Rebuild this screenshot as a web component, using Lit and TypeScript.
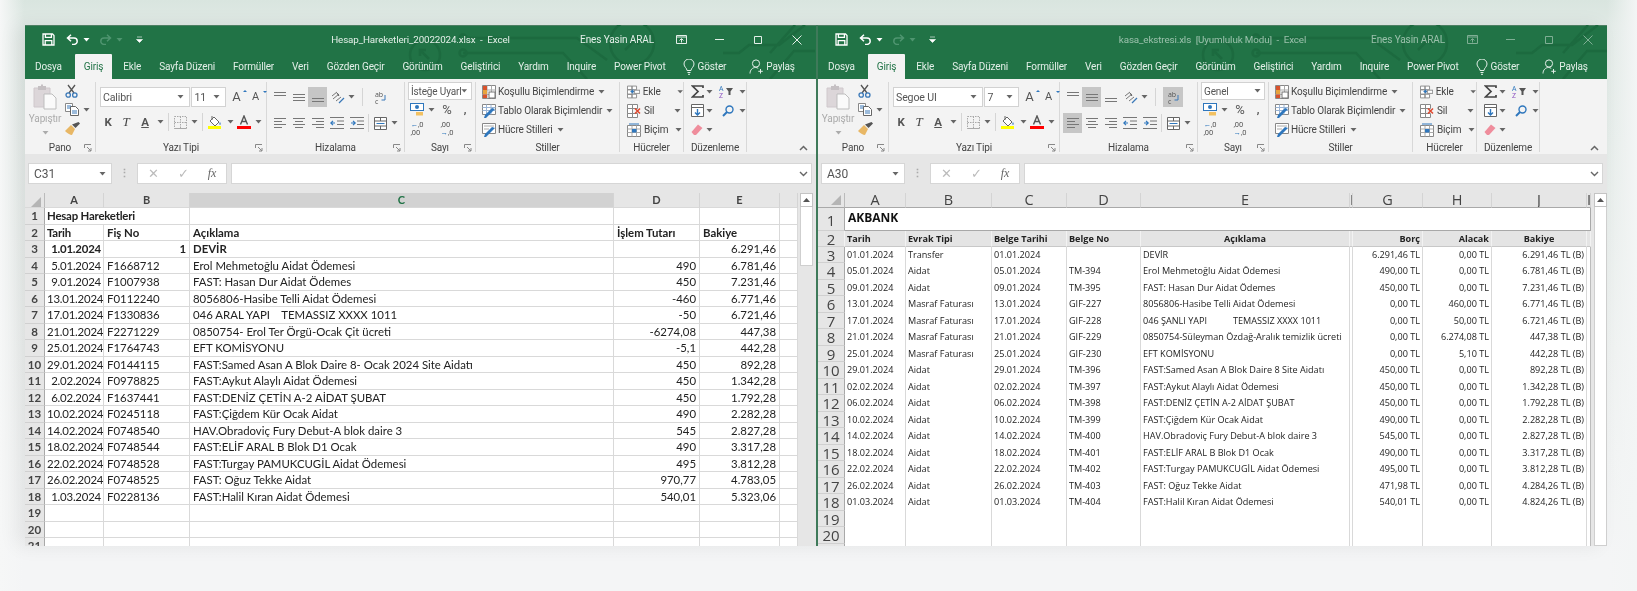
import { LitElement, html, svg, css, TemplateResult } from "lit";
import { customElement } from "lit/decorators.js";

const leftRows: string[][] = [
  ["1.01.2024", "1", "DEVİR", "", "6.291,46"],
  ["5.01.2024", "F1668712", "Erol Mehmetoğlu Aidat Ödemesi", "490", "6.781,46"],
  ["9.01.2024", "F1007938", "FAST: Hasan Dur Aidat Ödemes", "450", "7.231,46"],
  ["13.01.2024", "F0112240", "8056806-Hasibe Telli Aidat Ödemesi", "-460", "6.771,46"],
  ["17.01.2024", "F1330836", "046 ARAL YAPI    TEMASSIZ XXXX 1011", "-50", "6.721,46"],
  ["21.01.2024", "F2271229", "0850754- Erol Ter Örgü-Ocak Çit ücreti", "-6274,08", "447,38"],
  ["25.01.2024", "F1764743", "EFT KOMİSYONU", "-5,1", "442,28"],
  ["29.01.2024", "F0144115", "FAST:Samed Asan A Blok Daire 8- Ocak 2024 Site Aidatı", "450", "892,28"],
  ["2.02.2024", "F0978825", "FAST:Aykut Alaylı Aidat Ödemesi", "450", "1.342,28"],
  ["6.02.2024", "F1637441", "FAST:DENİZ ÇETİN A-2 AİDAT ŞUBAT", "450", "1.792,28"],
  ["10.02.2024", "F0245118", "FAST:Çiğdem Kür Ocak Aidat", "490", "2.282,28"],
  ["14.02.2024", "F0748540", "HAV.Obradoviç Fury Debut-A blok daire 3", "545", "2.827,28"],
  ["18.02.2024", "F0748544", "FAST:ELİF ARAL B Blok D1 Ocak", "490", "3.317,28"],
  ["22.02.2024", "F0748528", "FAST:Turgay PAMUKCUGİL Aidat Ödemesi", "495", "3.812,28"],
  ["26.02.2024", "F0748525", "FAST: Oğuz Tekke Aidat", "970,77", "4.783,05"],
  ["1.03.2024", "F0228136", "FAST:Halil Kıran Aidat Ödemesi", "540,01", "5.323,06"],
  ["", "", "", "", ""],
  ["", "", "", "", ""],
  ["", "", "", "", ""],
];

const rightRows: string[][] = [
  ["01.01.2024", "Transfer", "01.01.2024", "", "DEVİR", "6.291,46 TL", "0,00 TL", "6.291,46 TL (B)"],
  ["05.01.2024", "Aidat", "05.01.2024", "TM-394", "Erol Mehmetoğlu Aidat Ödemesi", "490,00 TL", "0,00 TL", "6.781,46 TL (B)"],
  ["09.01.2024", "Aidat", "09.01.2024", "TM-395", "FAST: Hasan Dur Aidat Ödemes", "450,00 TL", "0,00 TL", "7.231,46 TL (B)"],
  ["13.01.2024", "Masraf Faturası", "13.01.2024", "GIF-227", "8056806-Hasibe Telli Aidat Ödemesi", "0,00 TL", "460,00 TL", "6.771,46 TL (B)"],
  ["17.01.2024", "Masraf Faturası", "17.01.2024", "GIF-228", "046 ŞANLI YAPI           TEMASSIZ XXXX 1011", "0,00 TL", "50,00 TL", "6.721,46 TL (B)"],
  ["21.01.2024", "Masraf Faturası", "21.01.2024", "GIF-229", "0850754-Süleyman Özdağ-Aralık temizlik ücreti", "0,00 TL", "6.274,08 TL", "447,38 TL (B)"],
  ["25.01.2024", "Masraf Faturası", "25.01.2024", "GIF-230", "EFT KOMİSYONU", "0,00 TL", "5,10 TL", "442,28 TL (B)"],
  ["29.01.2024", "Aidat", "29.01.2024", "TM-396", "FAST:Samed Asan A Blok Daire 8 Site Aidatı", "450,00 TL", "0,00 TL", "892,28 TL (B)"],
  ["02.02.2024", "Aidat", "02.02.2024", "TM-397", "FAST:Aykut Alaylı Aidat Ödemesi", "450,00 TL", "0,00 TL", "1.342,28 TL (B)"],
  ["06.02.2024", "Aidat", "06.02.2024", "TM-398", "FAST:DENİZ ÇETİN A-2 AİDAT ŞUBAT", "450,00 TL", "0,00 TL", "1.792,28 TL (B)"],
  ["10.02.2024", "Aidat", "10.02.2024", "TM-399", "FAST:Çiğdem Kür Ocak Aidat", "490,00 TL", "0,00 TL", "2.282,28 TL (B)"],
  ["14.02.2024", "Aidat", "14.02.2024", "TM-400", "HAV.Obradoviç Fury Debut-A blok daire 3", "545,00 TL", "0,00 TL", "2.827,28 TL (B)"],
  ["18.02.2024", "Aidat", "18.02.2024", "TM-401", "FAST:ELİF ARAL B Blok D1 Ocak", "490,00 TL", "0,00 TL", "3.317,28 TL (B)"],
  ["22.02.2024", "Aidat", "22.02.2024", "TM-402", "FAST:Turgay PAMUKCUGİL Aidat Ödemesi", "495,00 TL", "0,00 TL", "3.812,28 TL (B)"],
  ["26.02.2024", "Aidat", "26.02.2024", "TM-403", "FAST: Oğuz Tekke Aidat", "471,98 TL", "0,00 TL", "4.284,26 TL (B)"],
  ["01.03.2024", "Aidat", "01.03.2024", "TM-404", "FAST:Halil Kıran Aidat Ödemesi", "540,01 TL", "0,00 TL", "4.824,26 TL (B)"],
  ["", "", "", "", "", "", "", ""],
  ["", "", "", "", "", "", "", ""],
  ["", "", "", "", "", "", "", ""],
];

const tabs = ["Ekle", "Sayfa Düzeni", "Formüller", "Veri", "Gözden Geçir", "Görünüm", "Geliştirici", "Yardım", "Inquire", "Power Pivot"];

const arrow = html`<svg class="arr" width="7" height="4" viewBox="0 0 7 4"><path d="M.5 0h6L3.5 3.5z" fill="#666"/></svg>`;
const chev = (c = "#666") => html`<svg width="9" height="6" viewBox="0 0 9 6"><path d="M1 1l3.5 3.5L8 1" fill="none" stroke=${c} stroke-width="1.4"/></svg>`;
const launcher = html`<svg class="launch" width="8" height="8" viewBox="0 0 8 8"><path d="M.5 4V.5H7M3 3l4 4M7 4v3H4" fill="none" stroke="#888"/></svg>`;
const lines = (ys: number[], xs: [number, number][], c = "#777") => html`<svg width="14" height="14" viewBox="0 0 14 14">${ys.map((y, i) => svg`<path d="M${xs[i % xs.length][0]} ${y + 0.5}H${xs[i % xs.length][1]}" stroke=${c} stroke-width="1"/>`)}</svg>`;

const ic = {
  save: html`<svg width="13" height="13" viewBox="0 0 13 13"><path d="M1 1h9.5L12 2.5V12H1z" fill="none" stroke="#fff" stroke-width="1.3"/><path d="M3.4 1v3.4h6V1M3.2 12V7.6h6.6V12" fill="none" stroke="#fff" stroke-width="1.3"/></svg>`,
  undo: (c: string) => html`<svg width="13" height="11" viewBox="0 0 13 11"><path d="M5 .8L1.5 4 5 7.2M1.8 4H8a3.2 3.2 0 0 1 0 6.4H6" fill="none" stroke=${c} stroke-width="1.5"/></svg>`,
  redo: (c: string) => html`<svg width="13" height="11" viewBox="0 0 13 11"><path d="M8 .8L11.5 4 8 7.2M11.2 4H5a3.2 3.2 0 0 0 0 6.4h2" fill="none" stroke=${c} stroke-width="1.5"/></svg>`,
  qat: html`<svg width="7" height="7" viewBox="0 0 7 7"><path d="M1 1h5M.5 3.5h6L3.5 6.5z" fill="#fff" stroke="#fff" stroke-width=".6"/></svg>`,
  bulb: html`<svg width="12" height="16" viewBox="0 0 12 16"><path d="M4 11.5C4 9 1 8 1 5a5 5 0 0 1 10 0c0 3-3 4-3 6.5zM4.5 13.5h3M5 15.3h2" fill="none" stroke="#e3efe8" stroke-width="1"/></svg>`,
  user: html`<svg width="15" height="15" viewBox="0 0 15 15"><circle cx="7" cy="4.5" r="3.6" fill="none" stroke="#e3efe8"/><path d="M1 14.5c0-3.5 2.5-6 5.5-6 1 0 2 .3 2.7.8M11.5 10v4.5M9.3 12.3h4.500" fill="none" stroke="#e3efe8"/></svg>`,
  paste: html`<svg width="24" height="26" viewBox="0 0 24 26"><path d="M1 4h16v19H1z" fill="#dcd6d9" stroke="#cfc8cc"/><path d="M5 2h8v4H5z" fill="#c5c0c3"/><path d="M8 .5h2v2H8z" fill="#c5c0c3"/><path d="M11 10h8l4 4v11H11z" fill="#fafafa" stroke="#bdbdbd"/></svg>`,
  cut: html`<svg width="13" height="14" viewBox="0 0 13 14"><path d="M3 1l6 8M10 1L4 9" stroke="#555" stroke-width="1.3" fill="none"/><circle cx="3.2" cy="11" r="2.2" fill="none" stroke="#3b79b8" stroke-width="1.3"/><circle cx="9.8" cy="11" r="2.2" fill="none" stroke="#3b79b8" stroke-width="1.3"/></svg>`,
  copy: html`<svg width="14" height="13" viewBox="0 0 14 13"><path d="M.5.5h7v8h-7z" fill="#fff" stroke="#888"/><path d="M5.5 3.5h5l3 3v6h-8z" fill="#fff" stroke="#666"/><path d="M2 3h4M2 5h3M7 8h5M7 10h5" stroke="#3b79b8"/></svg>`,
  brush: html`<svg width="15" height="13" viewBox="0 0 15 13"><path d="M0 9l6-6 4 4-3 6c-2 0-5-2-7-4z" fill="#e8b765"/><path d="M7 2.5L10.5 6 15 1.5 13.5 0z" fill="#555"/></svg>`,
  grow: html`<span class="fa">A<i class="up"></i></span>`,
  shrink: html`<span class="fa sm">A<i class="dn"></i></span>`,
  borders: html`<svg width="13" height="13" viewBox="0 0 13 13"><path d="M.5.5h12v12H.5zM6.5.5v12M.5 6.5h12" fill="none" stroke="#a9a9a9" stroke-dasharray="1.5 1"/><path d="M.5 12.5h12" stroke="#a9a9a9"/></svg>`,
  fill: html`<svg width="14" height="14" viewBox="0 0 14 14"><path d="M2 6l4-4 5 5-4 4z" fill="#fff" stroke="#666"/><path d="M4 1v4" stroke="#666"/><path d="M12 7c1 1.500 1 2.500 0 3-1-.5-1-1.500 0-3z" fill="#4a86c6"/><rect y="11" width="13" height="3" fill="#ffff00"/></svg>`,
  color: html`<svg width="14" height="14" viewBox="0 0 14 14"><path d="M3.500 9.500L7 1l3.500 8.500M4.800 6.500h4.400" fill="none" stroke="#555" stroke-width="1.400"/><rect y="11" width="14" height="3" fill="#ff0000"/></svg>`,
  orient: html`<svg width="15" height="13" viewBox="0 0 15 13"><path d="M2 5l5-4M3 8l6-5M6 10l5-4" stroke="#777" fill="none"/><path d="M9 12l5-5" stroke="#3b79b8" stroke-width="1.300"/><path d="M7 2l2 3" stroke="#555"/></svg>`,
  wrap: html`<svg width="13" height="15" viewBox="0 0 13 15"><text x="1" y="7" font-size="7" font-family="Open Sans" fill="#555">ab</text><text x="1" y="14" font-size="7" font-family="Open Sans" fill="#555">c</text><path d="M11 5v5H7.500" fill="none" stroke="#3b79b8"/></svg>`,
  indentL: html`<svg width="14" height="12" viewBox="0 0 14 12"><path d="M0 .5h14M7 4h7M7 7.500h7M0 11.500h14" stroke="#777"/><path d="M5 6H1M3 3.800L.8 6 3 8.200" fill="none" stroke="#2f77bd" stroke-width="1.200"/></svg>`,
  indentR: html`<svg width="14" height="12" viewBox="0 0 14 12"><path d="M0 .5h14M7 4h7M7 7.500h7M0 11.500h14" stroke="#777"/><path d="M1 6h4M3 3.800L5.200 6 3 8.200" fill="none" stroke="#2f77bd" stroke-width="1.200"/></svg>`,
  merge: html`<svg width="13" height="13" viewBox="0 0 13 13"><path d="M.5.500h12v12H.5zM.5 4h12M.5 9h12M6.500.500V4M6.500 9v3.500" fill="#fff" stroke="#666"/><path d="M2.500 6.500h8" stroke="#2f77bd"/></svg>`,
  money: html`<svg width="15" height="13" viewBox="0 0 15 13"><rect x=".5" y=".5" width="13" height="7" fill="#fff" stroke="#2f77bd"/><circle cx="7" cy="4" r="2" fill="#2f77bd"/><rect x="6" y="9" width="7" height="3.500" fill="#f2c162"/></svg>`,
  dec: html`<span class="dec"><b>←</b>,0<br>,00</span>`,
  dec2: html`<span class="dec">,00<br><b>→</b>,0</span>`,
  cond: html`<svg width="14" height="14" viewBox="0 0 14 14"><path d="M.5.500h13v13H.5z" fill="#fff" stroke="#888"/><path d="M.5 5h13M.5 9.500h13M5 .500v13M9.500.500v13" stroke="#aaa"/><rect x="1" y="1" width="4" height="4" fill="#d9532c"/><rect x="1" y="5" width="4" height="4" fill="#e8a33c"/><rect x="1" y="9.500" width="4" height="3.500" fill="#d9532c"/><rect x="7" y="7" width="6" height="6" fill="#fff" stroke="#777"/></svg>`,
  table: html`<svg width="14" height="14" viewBox="0 0 14 14"><path d="M.5.500h13v10H.5z" fill="#fff" stroke="#888"/><path d="M.5 3.500h13M.5 6.500h13M4.500.500v10M9 .500v10" stroke="#9ab4d4"/><path d="M13 5L6 12l-2 2H2l1-3 7-7z" fill="#2f77bd"/></svg>`,
  style: html`<svg width="14" height="14" viewBox="0 0 14 14"><path d="M.5.500h13v10H.5z" fill="#fff" stroke="#888"/><path d="M2 3h10M2 6h5" stroke="#aaa"/><path d="M13 5L6 12l-2 2H2l1-3 7-7z" fill="#2f77bd"/></svg>`,
  insert: html`<svg width="14" height="14" viewBox="0 0 14 14"><path d="M.5.500h5v4h-5zM.5 4.500h5v5h-5zM.5 9.500h5v4h-5zM5.500 9.500h5v4h-5zM5.500.500h5v4h-5z" fill="#fff" stroke="#888"/><path d="M14 6.500H4M7 4.500L4.500 6.500 7 8.500" fill="none" stroke="#2f77bd" stroke-width="1.200"/><rect x="8" y="5" width="6" height="3.500" fill="#fff" stroke="#888"/></svg>`,
  del: html`<svg width="14" height="14" viewBox="0 0 14 14"><path d="M.5.500h5v4h-5zM.5 4.500h5v5h-5zM.5 9.500h5v4h-5zM5.500 9.500h5v4h-5zM5.500.500h5v4h-5z" fill="#fff" stroke="#888"/><path d="M8 4.500l5 5M13 4.500l-5 5" stroke="#e0472d" stroke-width="1.500"/></svg>`,
  format: html`<svg width="14" height="14" viewBox="0 0 14 14"><path d="M.5 2.500h13v11H.5z" fill="#fff" stroke="#888"/><path d="M.5 6h13M.5 9.500h13M5 2.500v11M9.500 2.500v11" stroke="#aaa"/><rect x="5" y="6" width="4.500" height="3.500" fill="#2f77bd"/><path d="M2 1h10" stroke="#2f77bd"/></svg>`,
  sigma: html`<svg width="13" height="13" viewBox="0 0 13 13"><path d="M12 3V1H1.500L7 6.500 1.500 12H12v-2" fill="none" stroke="#444" stroke-width="1.700"/></svg>`,
  sort: html`<svg width="18" height="15" viewBox="0 0 18 15"><text x="0" y="6.500" font-size="7" font-family="Open Sans" fill="#2f77bd">A</text><text x="0" y="14" font-size="7" font-family="Open Sans" fill="#8a4fc0">Z</text><path d="M7 4h7L11.500 7.500V11h-2V7.500z" fill="#555"/></svg>`,
  filld: html`<svg width="13" height="13" viewBox="0 0 13 13"><path d="M.5.500h12v12H.5z" fill="#fff" stroke="#666"/><path d="M.5 3.500h12" stroke="#666"/><path d="M6.500 5v6M4 8.500l2.500 2.500L9 8.500" fill="none" stroke="#2f77bd" stroke-width="1.400"/></svg>`,
  find: html`<svg width="12" height="12" viewBox="0 0 12 12"><circle cx="7.500" cy="4.500" r="3.500" fill="none" stroke="#2f77bd" stroke-width="1.400"/><path d="M5 7L1 11" stroke="#2f77bd" stroke-width="2"/></svg>`,
  eraser: html`<svg width="12" height="12" viewBox="0 0 12 12"><path d="M7 .5L11.500 4 5 11H3L.5 8z" fill="#ef8d9c"/></svg>`,
  corner: html`<svg width="10" height="10" viewBox="0 0 10 10"><path d="M10 0v10H0z" fill="#b5b5b5"/></svg>`,
  ribbonDisp: (c: string) => html`<svg width="11" height="9" viewBox="0 0 11 9"><path d="M.5.500h10v8H.5z" fill="none" stroke=${c}/><path d="M.5 2h10" stroke=${c}/><path d="M5.500 7.500V4M3.500 5.500l2-2 2 2" fill="none" stroke=${c}/></svg>`,
  min: (c: string) => html`<svg width="9" height="9" viewBox="0 0 9 9"><path d="M0 4.500h9" stroke=${c}/></svg>`,
  max: (c: string) => html`<svg width="8" height="8" viewBox="0 0 8 8"><path d="M.5.500h7v7h-7z" fill="none" stroke=${c}/></svg>`,
  close: (c: string) => html`<svg width="10" height="10" viewBox="0 0 10 10"><path d="M.5.500l9 9M9.500.500l-9 9" stroke=${c}/></svg>`,
  scrollUp: html`<svg width="7" height="4" viewBox="0 0 7 4"><path d="M0 4h7L3.500 0z" fill="#555"/></svg>`,
};

const circuit = html`<svg class="circuit" width="790" height="54" viewBox="0 0 790 54" fill="none" stroke="#1c6a3f" stroke-width="2.500">
  <circle cx="400" cy="30" r="15"/><path d="M404 34l-9-9M395 31v-6h6"/>
  <circle cx="607" cy="18" r="22"/><path d="M600 25l13-13M605 12h8v8"/>
  <path d="M438 13H552L582 35"/><circle cx="438" cy="13" r="3.500"/>
  <path d="M438 28H538L562 54"/><circle cx="438" cy="28" r="3.500"/>
  <path d="M698 28h16l10-8h30l26-20M745 54l24-28h21M770 0l-25 28"/>
</svg>`;

const arrowW = html`<svg width="7" height="4" viewBox="0 0 7 4"><path d="M.5 0h6L3.500 3.500z" fill="#fff"/></svg>`;
const arrowD = html`<svg width="7" height="4" viewBox="0 0 7 4"><path d="M.5 0h6L3.500 3.500z" fill="#4f9570"/></svg>`;

interface Cfg {
  title: string; font: string; size: string; cell: string; numfmt: string; inactive: boolean;
  alignTop: "mid" | "bottom"; alignLeft: boolean; wrapOn: boolean;
}

@customElement("app-root")
export class AppRoot extends LitElement {
  static styles = css`
    :host { display: block; width: 1637px; height: 591px; overflow: hidden; box-sizing: border-box;
      padding: 25px 30px 45px 25px;
      background: linear-gradient(90deg, #f6f7f7 0, rgba(246,247,247,0) 24px, rgba(246,247,247,0) 1607px, #f3f5f5 1637px),
        linear-gradient(180deg, #d9e5df 0, #e0e9e5 25px, #eef1f0 350px, #f4f5f6 560px);
      font-family: Roboto, "Open Sans", sans-serif; }
    .desk { display: flex; height: 100%; filter: blur(.4px); box-shadow: -8px 0 18px rgba(0,0,0,.07); }
    .win { display: flex; flex-direction: column; height: 100%; overflow: hidden; background: #e6e6e6; }
    .win.l { width: 791px; }
    .win.r { width: 789px; }
    .split { width: 2px; background: #3f7a5a; }

    .top { position: relative; background: #217346; height: 54px; box-shadow: inset 0 1px 0 #4d7f63; color: #e3efe8; font-size: 10px; letter-spacing: -.15px; flex: none; }
    .circuit { position: absolute; left: 0; top: 0; }
    .titlebar { position: relative; height: 29px; display: grid; grid-template-columns: 1fr auto 1fr; align-items: center; }
    .qat { display: flex; align-items: center; padding-left: 17px; }
    .qat .g1 { margin-left: 11px; line-height: 0; }
    .qat .dd { margin: 0 9px 0 4px; line-height: 0; }
    .wtitle { white-space: pre; font-size: 9.8px; letter-spacing: -.12px; }
    .inactive .wtitle, .inactive .uname { opacity: .62; }
    .wctl { display: flex; align-items: center; justify-content: flex-end; padding-right: 14px; }
    .uname { white-space: nowrap; margin-right: 22px; letter-spacing: -.1px; }
    .wctl .b1 { margin-right: 28px; line-height: 0; }
    .wctl .b2 { margin-right: 30px; line-height: 0; }
    .wctl .b3 { margin-right: 30px; line-height: 0; }
    .wctl .b4 { line-height: 0; }
    .tabs { position: relative; height: 25px; display: flex; align-items: center; padding-left: 1px; }
    .tab { padding: 0 9px; line-height: 25px; white-space: nowrap; }
    .tab.on { background: #f3f3f3; color: #217346; margin: 0 2px 0 4px; border-radius: 1px 1px 0 0; }
    .tell { display: flex; align-items: center; gap: 3px; margin-left: 8px; }
    .share { display: flex; align-items: center; gap: 2px; margin-left: 23px; }

    .ribbon { height: 75px; background: #f3f3f3; box-sizing: border-box; padding-top: 3px; display: flex; color: #444; font-size: 10px; letter-spacing: -.15px; flex: none; }
    .grp { position: relative; display: flex; flex-direction: column; border-right: 1px solid #d8d8d8; height: 70px; box-sizing: border-box; flex: none; }
    .gbody { flex: 1; min-height: 0; display: flex; flex-direction: column; }
    .glabel { position: relative; top: 2px; height: 12px; line-height: 12px; text-align: center; color: #444; white-space: nowrap; }
    .launch { position: absolute; right: 3px; bottom: 0; }
    .g-pano { width: 71px; } .g-font { width: 171px; } .g-align { width: 138px; }
    .g-num { width: 71px; } .g-style { width: 144px; } .g-cell { width: 64px; } .g-edit { width: 63px; }
    .g-rest { flex: 1; display: flex; align-items: flex-end; justify-content: flex-end; padding: 0 8px 1px 0; height: 70px; box-sizing: border-box; }

    .pano { display: grid; grid-template-columns: 40px 31px; }
    .paste { display: flex; flex-direction: column; align-items: center; padding-top: 2px; color: #ababab; line-height: 14px; }
    .paste span { margin-top: 2px; }
    .paste .arr { margin-top: 5px; opacity: .5; }
    .pano-r { display: flex; flex-direction: column; margin-top: -1px; }
    .pano-r div { height: 19px; display: flex; align-items: center; gap: 4px; }

    .frow1 { display: flex; align-items: center; gap: 1px; padding: 5px 0 0 4px; height: 20px; }
    .combo { height: 20px; background: #fff; border: 1px solid #d2d2d2; box-sizing: border-box; display: flex; align-items: center; justify-content: space-between; padding: 0 5px 0 2px; font-size: 10.6px; color: #555; }
    .combo.f { width: 91px; } .combo.s { width: 35px; }
    .fa { position: relative; font-size: 13px; color: #555; width: 12px; margin-left: 5px; margin-right: 2px; text-align: left; line-height: 16px; }
    .fa.sm { font-size: 11px; margin-left: 5px; }
    .fa i { position: absolute; top: 1px; right: -3px; width: 0; height: 0; border: 2.5px solid transparent; }
    .fa .up { border-bottom-color: #2f77bd; top: -1px; }
    .fa .dn { border-top-color: #2f77bd; top: 2px; }
    .frow2 { display: grid; grid-template-columns: 18px 18px 20px 10px 6px 18px 10px 6px 20px 10px 18px 10px; margin: 5px 0 0 3px; height: 20px; align-items: center; justify-items: center; }
    .bt { font-weight: 700; font-size: 11.5px; color: #555; }
    .it { font-style: italic; font-family: "Liberation Serif", serif; font-size: 13px; }
    .ul { font-weight: 700; font-size: 11.5px; color: #555; text-decoration: underline; }
    .vs { width: 1px; height: 18px; background: #d5d5d5; }
    .arow1, .arow2 { display: grid; margin-left: 3px; height: 20px; align-items: center; justify-items: center; }
    .arow1 { grid-template-columns: 19px 19px 19px 20px 8px 15px 20px; margin-top: 5px; }
    .arow2 { grid-template-columns: 19px 19px 19px 20px 19px 4px 20px 8px; margin-top: 6px; }
    .btn { width: 19px; height: 20px; display: flex; align-items: center; justify-content: center; }
    .btn.on { background: #c6c6c6; }
    .wrapb { width: 20px; height: 20px; display: flex; align-items: center; justify-content: center; }
    .wrapb.on { background: #c6c6c6; }

    .nbox { width: 64px; height: 18px; margin-left: 3px; background: #fff; border: 1px solid #d2d2d2; box-sizing: border-box; display: flex; align-items: center; justify-content: space-between; padding: 0 3px 0 2px; color: #555; white-space: nowrap; flex: none; }
    .nrow { display: grid; grid-template-columns: 18px 10px 22px 14px; margin-left: 3px; height: 19px; align-items: center; justify-items: center; }
    .pct { font-size: 13px; color: #555; }
    .comma { font-weight: 700; font-size: 11px; color: #555; line-height: 10px; }
    .dec { font-size: 7.5px; line-height: 7.5px; color: #555; display: block; white-space: nowrap; letter-spacing: 0; }
    .dec b { color: #2f77bd; font-weight: 400; }

    .srow { display: flex; align-items: center; height: 19px; padding-left: 6px; gap: 2px; white-space: nowrap; }
    .srow .arr { margin-left: 2px; }
    .crow { display: flex; align-items: center; height: 19px; padding-left: 7px; gap: 3px; white-space: nowrap; }
    .crow .sp1 { width: 11px; } .crow .sp2 { width: 14px; } .crow .sp3 { width: 1px; }
    .erow { display: grid; grid-template-columns: 14px 10px 5px 18px 10px; margin-left: 6px; height: 19px; align-items: center; justify-items: center; }

    .fbar { flex: none; height: 39px; box-sizing: border-box; padding: 9px 4px 9px 3px; display: flex; align-items: stretch; background: #e6e6e6; }
    .namebox { width: 84px; background: #fff; border: 1px solid #d6d6d6; box-sizing: border-box; display: flex; align-items: center; justify-content: space-between; padding: 0 5px; font-size: 12px; color: #555; }
    .dots { width: 25px; display: flex; align-items: center; justify-content: center; color: #aaa; font-size: 11px; font-weight: 700; }
    .fxbox { width: 90px; background: #fff; border: 1px solid #d6d6d6; box-sizing: border-box; display: grid; grid-template-columns: 30px 30px 28px; align-items: center; justify-items: center; color: #bbb; font-size: 13px; }
    .fxbox i { color: #666; font-family: "Liberation Serif", serif; font-size: 12px; }
    .input { flex: 1; margin-left: 4px; background: #fff; border: 1px solid #d6d6d6; box-sizing: border-box; display: flex; align-items: center; justify-content: flex-end; padding-right: 3px; }

    .sheetwrap { flex: 1; min-height: 0; display: flex; background: #e6e6e6; overflow: hidden; }
    .sheet { flex: none; overflow: hidden; }
    .sheet.l { width: 773px; margin-right: 2px; font-family: Lato, sans-serif; font-size: 11.4px; color: #222; }
    .sheet.r { width: 773px; margin-right: 3px; font-family: "Open Sans", sans-serif; font-size: 9.1px; color: #222; }
    .row { display: grid; grid-template-columns: var(--cols); height: 16.5px; }
    .row > div { box-sizing: border-box; white-space: pre; line-height: 16px; overflow: hidden; background: #fff; border-right: 1px solid #d9d9d9; padding: 0 2px; }
    .sheet.l .row > div { border-bottom: 1px solid #d9d9d9; padding: 0 3px; }
    .sheet.l .row > div:nth-child(2) { padding: 0 2px; letter-spacing: -.2px; }
    .row > .rh { background: #e6e6e6; text-align: center; color: #555; border-right: 1px solid #a9a9a9; border-bottom: 1px solid #d0d0d0 !important; padding: 0 !important; font-weight: 400; }
    .sheet.l .rh { font-size: 11.5px; font-weight: 700 !important; color: #444; }
    .sheet.r .rh { font-size: 15px; font-weight: 400; line-height: 16px; color: #444; }
    .row.head { height: 15px; }
    .row.head > div { background: #e6e6e6; text-align: center; color: #444; border-right: 1px solid #d4d4d4; border-bottom: 1px solid #a9a9a9; line-height: 14px; padding: 0; }
    .sheet.l .head > div { font-weight: 700; font-size: 11px; }
    .sheet.r .head > div { font-size: 14.5px; color: #444; }
    .row.head > .corner { display: flex; align-items: flex-end; justify-content: flex-end; padding: 0 3px 2px 0; border-right: 1px solid #bbb; }
    .row.head > .sel { background: #d2d2d2; color: #217346; border-bottom: 2px solid #217346; }
    .num { text-align: right; }
    .row > .bold, .row.b > div { font-weight: 700; }
    .row > .noline { border-right: none; overflow: visible; position: relative; z-index: 1; background: transparent; }
    .row.b { background: #fff; }
    .sheet.r .row.r1 { height: 22.7px; }
    .row.r1 > div { border-bottom: 1px solid #a8a8a8; }
    .row.r1 > .merged { grid-column: 2 / -1; font-weight: 700; font-size: 12px; line-height: 19px; color: #111; border-right: 1px solid #a8a8a8; padding-left: 3px; }
    .row.r1 > .rh { line-height: 25px; }
    .row.r2 { height: 16px; }
    .row.r2 > div { background: #e4e4e4; font-weight: 700; border-bottom: 1px solid #c8c8c8; border-right: 1px solid #f2f2f2; }
    .cc { text-align: center; }
    .sheet.r .row:not(.head):not(.r1):not(.r2) > div:last-child { border-right: 1px solid #bcbcbc; }
    .narrow { padding: 0 !important; }

    .scroll { width: 13px; flex: none; display: flex; flex-direction: column; }
    .sbtn { height: 14px; background: #fff; border: 1px solid #c4c4c4; box-sizing: border-box; display: flex; align-items: center; justify-content: center; flex: none; }
    .thumb { background: #fff; border: 1px solid #cfcfcf; border-top: none; box-sizing: border-box; height: 59px; }
    .thumb.full { flex: 1; height: auto; }
  `;

  private groups(c: Cfg): TemplateResult {
    const ln = (ys: number[], xs: [number, number][]) => lines(ys, xs);
    const full: [number, number][] = [[1, 13]];
    return html`<div class="ribbon">
      <div class="grp g-pano">
        <div class="gbody pano">
          <div class="paste">${ic.paste}<span>Yapıştır</span>${arrow}</div>
          <div class="pano-r"><div>${ic.cut}</div><div>${ic.copy}${arrow}</div><div>${ic.brush}</div></div>
        </div>
        <div class="glabel">Pano</div>${launcher}
      </div>
      <div class="grp g-font">
        <div class="gbody">
          <div class="frow1">
            <div class="combo f"><span>${c.font}</span>${arrow}</div>
            <div class="combo s"><span>${c.size}</span>${arrow}</div>
            ${ic.grow}${ic.shrink}
          </div>
          <div class="frow2">
            <span class="bt">K</span><span class="it">T</span><span class="ul">A</span>${arrow}<span class="vs"></span>
            ${ic.borders}${arrow}<span class="vs"></span>${ic.fill}${arrow}${ic.color}${arrow}
          </div>
        </div>
        <div class="glabel">Yazı Tipi</div>${launcher}
      </div>
      <div class="grp g-align">
        <div class="gbody">
          <div class="arow1">
            <div class="btn">${ln([2, 5], full)}</div>
            <div class="btn ${c.alignTop === "mid" ? "on" : ""}">${ln([4, 7, 10], full)}</div>
            <div class="btn ${c.alignTop === "bottom" ? "on" : ""}">${ln([8, 11], full)}</div>
            ${ic.orient}${arrow}<span class="vs"></span>
            <div class="wrapb ${c.wrapOn ? "on" : ""}">${ic.wrap}</div>
          </div>
          <div class="arow2">
            <div class="btn ${c.alignLeft ? "on" : ""}">${ln([2, 5, 8, 11], [[1, 13], [1, 9]])}</div>
            <div class="btn">${ln([2, 5, 8, 11], [[1, 13], [3, 11]])}</div>
            <div class="btn">${ln([2, 5, 8, 11], [[1, 13], [5, 13]])}</div>
            ${ic.indentL}${ic.indentR}<span class="vs"></span>${ic.merge}${arrow}
          </div>
        </div>
        <div class="glabel">Hizalama</div>${launcher}
      </div>
      <div class="grp g-num">
        <div class="gbody">
          <div class="nbox"><span>${c.numfmt}</span>${arrow}</div>
          <div class="nrow">${ic.money}${arrow}<span class="pct">%</span><span class="comma">,</span></div>
          <div class="nrow">${ic.dec}<span></span>${ic.dec2}</div>
        </div>
        <div class="glabel">Sayı</div>${launcher}
      </div>
      <div class="grp g-style">
        <div class="gbody">
          <div class="srow">${ic.cond}<span>Koşullu Biçimlendirme</span>${arrow}</div>
          <div class="srow">${ic.table}<span>Tablo Olarak Biçimlendir</span>${arrow}</div>
          <div class="srow">${ic.style}<span>Hücre Stilleri</span>${arrow}</div>
        </div>
        <div class="glabel">Stiller</div>
      </div>
      <div class="grp g-cell">
        <div class="gbody">
          <div class="crow">${ic.insert}<span>Ekle</span><span class="sp1"></span>${arrow}</div>
          <div class="crow">${ic.del}<span>Sil</span><span class="sp2"></span>${arrow}</div>
          <div class="crow">${ic.format}<span>Biçim</span><span class="sp3"></span>${arrow}</div>
        </div>
        <div class="glabel">Hücreler</div>
      </div>
      <div class="grp g-edit">
        <div class="gbody">
          <div class="erow">${ic.sigma}${arrow}<span></span>${ic.sort}${arrow}</div>
          <div class="erow">${ic.filld}${arrow}<span></span>${ic.find}${arrow}</div>
          <div class="erow">${ic.eraser}${arrow}</div>
        </div>
        <div class="glabel">Düzenleme</div>
      </div>
      <div class="g-rest">${html`<svg width="9" height="6" viewBox="0 0 9 6"><path d="M1 5l3.500-3.500L8 5" fill="none" stroke="#666" stroke-width="1.500"/></svg>`}</div>
    </div>`;
  }

  private chrome(c: Cfg, sheet: TemplateResult, cls: string): TemplateResult {
    const wc = c.inactive ? "#7fae94" : "#e3efe8";
    return html`<div class="win ${cls} ${c.inactive ? "inactive" : ""}">
      <div class="top">
        ${circuit}
        <div class="titlebar">
          <div class="qat">
            ${ic.save}<span class="g1">${ic.undo("#fff")}</span><span class="dd">${arrowW}</span>
            ${ic.redo("#4f9570")}<span class="dd">${arrowD}</span><span class="dd">${ic.qat}</span>
          </div>
          <div class="wtitle">${c.title}</div>
          <div class="wctl">
            <span class="uname">Enes Yasin ARAL</span>
            <span class="b1">${ic.ribbonDisp(wc)}</span><span class="b2">${ic.min(wc)}</span><span class="b3">${ic.max(wc)}</span><span class="b4">${ic.close(wc)}</span>
          </div>
        </div>
        <div class="tabs">
          <div class="tab">Dosya</div><div class="tab on">Giriş</div>
          ${tabs.map((t) => html`<div class="tab">${t}</div>`)}
          <div class="tell">${ic.bulb}<span>Göster</span></div>
          <div class="share">${ic.user}<span>Paylaş</span></div>
        </div>
      </div>
      ${this.groups(c)}
      <div class="fbar">
        <div class="namebox"><span>${c.cell}</span>${arrow}</div>
        <div class="dots">⋮</div>
        <div class="fxbox"><span>✕</span><span>✓</span><i>fx</i></div>
        <div class="input">${chev()}</div>
      </div>
      <div class="sheetwrap">${sheet}</div>
    </div>`;
  }

  private leftSheet(): TemplateResult {
    const cols = "20px 59px 86px 424px 86px 80px 18px";
    return html`<div class="sheet l" style="--cols:${cols}">
      <div class="row head"><div class="corner">${ic.corner}</div><div>A</div><div>B</div><div class="sel">C</div><div>D</div><div>E</div><div></div></div>
      <div class="row b"><div class="rh">1</div><div class="noline">Hesap Hareketleri</div><div></div><div></div><div></div><div></div><div></div></div>
      <div class="row b"><div class="rh">2</div><div>Tarih</div><div>Fiş No</div><div>Açıklama</div><div>İşlem Tutarı</div><div>Bakiye</div><div></div></div>
      ${leftRows.map((r, i) => html`<div class="row">
        <div class="rh">${i + 3}</div>
        <div class="num ${i === 0 ? "bold" : ""}">${r[0]}</div>
        <div class="${i === 0 ? "num bold" : ""}">${r[1]}</div>
        <div class="${i === 0 ? "bold" : ""}">${r[2]}</div>
        <div class="num">${r[3]}</div><div class="num">${r[4]}</div><div></div>
      </div>`)}
    </div>
    <div class="scroll"><div class="sbtn">${ic.scrollUp}</div><div class="thumb"></div></div>`;
  }

  private rightSheet(): TemplateResult {
    const cols = "27px 61px 86px 75px 74px 209px 3px 70px 69px 95px 4px";
    const letters = ["A", "B", "C", "D", "E", "F", "G", "H", "J", "I"];
    const heads = ["Tarih", "Evrak Tipi", "Belge Tarihi", "Belge No"];
    return html`<div class="sheet r" style="--cols:${cols}">
      <div class="row head"><div class="corner">${ic.corner}</div>${letters.map((l) => html`<div>${l}</div>`)}</div>
      <div class="row r1"><div class="rh">1</div><div class="merged">AKBANK</div></div>
      <div class="row r2"><div class="rh">2</div>${heads.map((h) => html`<div>${h}</div>`)}
        <div class="cc">Açıklama</div><div class="narrow"></div><div class="num">Borç</div><div class="num">Alacak</div><div class="cc">Bakiye</div><div class="narrow"></div></div>
      ${rightRows.map((r, i) => html`<div class="row">
        <div class="rh">${i + 3}</div>
        <div>${r[0]}</div><div>${r[1]}</div><div>${r[2]}</div><div>${r[3]}</div><div>${r[4]}</div>
        <div class="narrow"></div>
        <div class="num">${r[5]}</div><div class="num">${r[6]}</div><div class="num">${r[7]}</div><div class="narrow"></div>
      </div>`)}
    </div>
    <div class="scroll"><div class="sbtn">${ic.scrollUp}</div><div class="thumb full"></div></div>`;
  }

  render() {
    const a: Cfg = { title: "Hesap_Hareketleri_20022024.xlsx  -  Excel", font: "Calibri", size: "11", cell: "C31", numfmt: "İsteğe Uyarl", inactive: false, alignTop: "bottom", alignLeft: false, wrapOn: false };
    const b: Cfg = { title: "kasa_ekstresi.xls  [Uyumluluk Modu]  -  Excel", font: "Segoe UI", size: "7", cell: "A30", numfmt: "Genel", inactive: true, alignTop: "mid", alignLeft: true, wrapOn: true };
    return html`<div class="desk">
      ${this.chrome(a, this.leftSheet(), "l")}
      <div class="split"></div>
      ${this.chrome(b, this.rightSheet(), "r")}
    </div>`;
  }
}
